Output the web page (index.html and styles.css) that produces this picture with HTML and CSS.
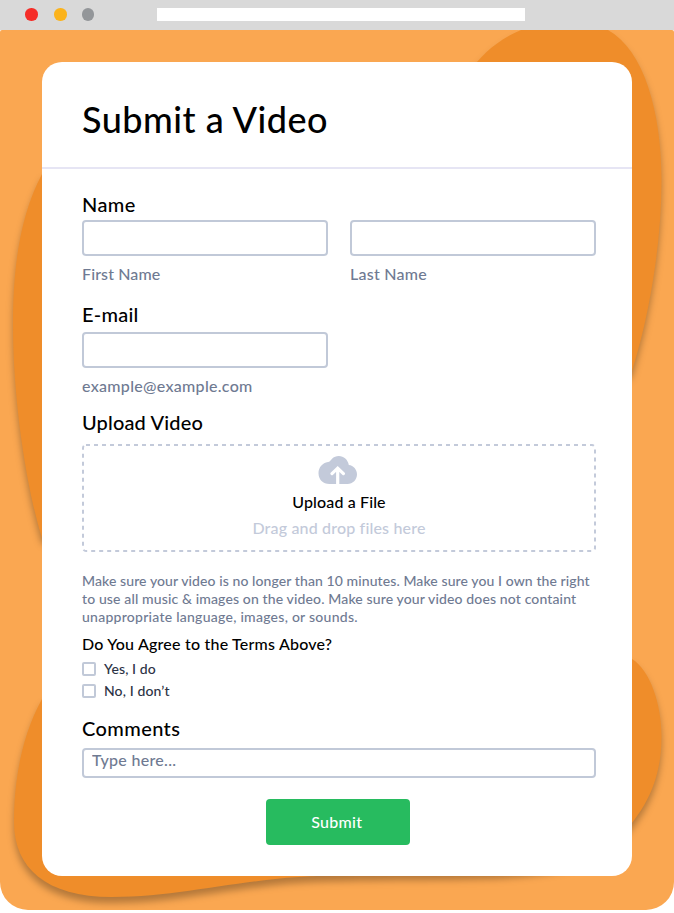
FILE: index.html
```html
<!DOCTYPE html>
<html lang="en">
<head>
<meta charset="utf-8">
<title>Submit a Video</title>
<link rel="stylesheet" href="styles.css">
</head>
<body>
<div class="window">
  <header class="titlebar">
    <span class="dot dot-red"></span>
    <span class="dot dot-yellow"></span>
    <span class="dot dot-grey"></span>
    <span class="address"></span>
  </header>
  <main class="stage">
    <svg class="blobs" viewBox="0 30 674 880" aria-hidden="true">
      <path d="M477 62C489 48 504 37 521 30L540 20H590L608 30C644 50 661.500 112 661.500 180C661.500 250 647 324 632 371L400 560L42 538C26 486 13 400 13 324C13 260 22 212 42 174Z"/>
      <path d="M42 699C22 735 14 780 14 822C14 868 46 897 112 897C185 897 250 876 335 875.500C430 872 520 878 575 862C600 854 618 842 632 823C650 800 661.500 774 661.500 736C661.500 704 650 670 632 659L400 620Z"/>
    </svg>
    <form class="card">
      <div class="card-head"><h1>Submit a Video</h1></div>
      <div class="card-body">
        <h2 class="l-name">Name</h2>
        <div class="pair">
          <div><input class="field" type="text"><div class="sub">First Name</div></div>
          <div><input class="field" type="text"><div class="sub s-last">Last Name</div></div>
        </div>
        <h2 class="l-email">E-mail</h2>
        <div class="pair">
          <div><input class="field" type="text"><div class="sub s-mail">example@example.com</div></div>
        </div>
        <h2 class="l-upload">Upload Video</h2>
        <div class="drop">
          <svg class="drop-edge" viewBox="0 0 514 108" aria-hidden="true"><rect x="1" y="1" width="512" height="106" rx="3"/></svg>
          <svg class="cloud" viewBox="0 0 39 29" aria-hidden="true">
            <path class="cloud-shape" d="M11.500 28C5 28 .5 23.500 .5 17.200C.5 11.500 4.500 6.800 10 6C12 5.700 12.700 4 13.800 2.900C16 .9 18.200 0 20.800 0C25.800 0 29.900 3.800 30.800 9C35.500 9.500 39 13.500 39 18.300C39 23.800 34.800 28 29.500 28Z"/>
            <path class="cloud-arrow" d="M19.700 30V13M14 17.600L19.700 12.200L25.400 17.600"/>
          </svg>
          <div class="drop-title">Upload a File</div>
          <div class="drop-hint">Drag and drop files here</div>
        </div>
        <p class="note"><span class="n1">Make sure your video is no longer than 10 minutes. Make sure you I own the right</span><br><span class="n2">to use all music &amp; images on the video. Make sure your video does not containt</span><br><span class="n3">unappropriate language, images, or sounds.</span></p>
        <h3>Do You Agree to the Terms Above?</h3>
        <label class="check"><input type="checkbox"><span>Yes, I do</span></label>
        <label class="check"><input type="checkbox"><span>No, I don’t</span></label>
        <h2 class="l-comments">Comments</h2>
        <input class="field comment" type="text" placeholder="Type here...">
        <button type="button">Submit</button>
      </div>
    </form>
  </main>
</div>
</body>
</html>
```
FILE: styles.css
```css
* { box-sizing: border-box; }
body { margin: 0; background: #fff; color: #000; font-family: Lato, "Liberation Sans", sans-serif; font-weight: 500; }
h1, h2, h3, p { margin: 0; font-weight: 500; }
.window { height: 913px; }
.titlebar { height: 30px; background: #d9d9d9; display: flex; align-items: center; padding: 0 0 1px 25px; }
.dot { width: 12.5px; height: 12.5px; border-radius: 50%; margin-right: 16.5px; }
.dot-red { background: #f52d28; }
.dot-yellow { background: #fbb31c; margin-right: 15px; }
.dot-grey { background: #939699; margin-right: 62.5px; }
.address { width: 368.5px; height: 12.5px; background: #fff; }
.stage { position: relative; height: 880px; overflow: hidden; background: #faa751; border-radius: 2px 2px 28px 28px; padding: 32px 42px 34px; }
.blobs { position: absolute; inset: 0; width: 674px; height: 880px; fill: #ef8d2a; filter: drop-shadow(0 6px 3.5px rgba(0, 0, 0, .28)); }
.card { position: relative; height: 814px; background: #fff; border-radius: 20px; }
.card-head { height: 107px; padding: 33px 40px 0; border-bottom: 2px solid #e6e5f4; }
h1 { font-size: 36px; line-height: 48px; letter-spacing: .5px; white-space: nowrap; }
.card-body { padding: 24px 36px 0 40px; }
h2 { font-size: 20px; line-height: 22px; letter-spacing: .4px; }
.l-name { margin-bottom: 5px; }
.pair { display: grid; grid-template-columns: 246px 246px; gap: 22px; }
.field { display: block; width: 100%; height: 36px; border: 2px solid #c1c9d8; border-radius: 4px; background: #fff; padding: 0 8px; font: inherit; outline: 0; }
.sub { font-size: 16px; line-height: 20px; margin-top: 8px; color: #6f7a92; letter-spacing: .12px; }
.s-last { letter-spacing: .25px; }
.s-mail { letter-spacing: .3px; }
.l-email { margin: 19px 0 7px; letter-spacing: .25px; }
.l-upload { margin: 15px 0 11px; letter-spacing: .15px; }
.drop { position: relative; height: 108px; display: flex; flex-direction: column; align-items: center; text-align: center; padding-top: 12px; }
.drop-edge { position: absolute; inset: 0; width: 514px; height: 108px; fill: none; stroke: #c3cada; stroke-width: 2; stroke-dasharray: 4 4; }
.cloud { width: 39px; height: 29px; margin-right: 3px; }
.cloud-shape { fill: #c3cada; }
.cloud-arrow { fill: none; stroke: #fff; stroke-width: 3.2; stroke-linecap: round; }
.drop-title { font-size: 16px; line-height: 20px; margin-top: 7px; letter-spacing: .13px; }
.drop-hint { font-size: 16px; line-height: 20px; margin-top: 6px; color: #c3cada; letter-spacing: .17px; }
.note { margin-top: 20px; font-size: 14px; line-height: 18px; color: #6f7a92; white-space: nowrap; }
.n1 { letter-spacing: .09px; }
.n2 { letter-spacing: .13px; }
.n3 { letter-spacing: .26px; }
h3 { margin-top: 8px; font-size: 16px; line-height: 20px; letter-spacing: .21px; }
.check { display: flex; align-items: center; gap: 8px; height: 22px; font-size: 14px; line-height: 18px; color: #2c3345; letter-spacing: .12px; }
h3 + .check { margin-top: 4px; }
.check input { appearance: none; width: 14px; height: 14px; margin: 0; border: 2px solid #c1c9d8; border-radius: 2px; }
.l-comments { margin: 15px 0 9px; }
.comment { height: 30px; padding: 0 8px 8px; font-size: 16px; letter-spacing: .3px; }
.comment::placeholder { color: #6f7a92; opacity: 1; }
button { display: block; width: 143.5px; height: 45.5px; margin: 21px 0 0 184px; padding: 0 2px 1px 0; border: 0; border-radius: 4px; background: #27bb5f; color: #fff; font: inherit; font-size: 16px; letter-spacing: .3px; }
```
